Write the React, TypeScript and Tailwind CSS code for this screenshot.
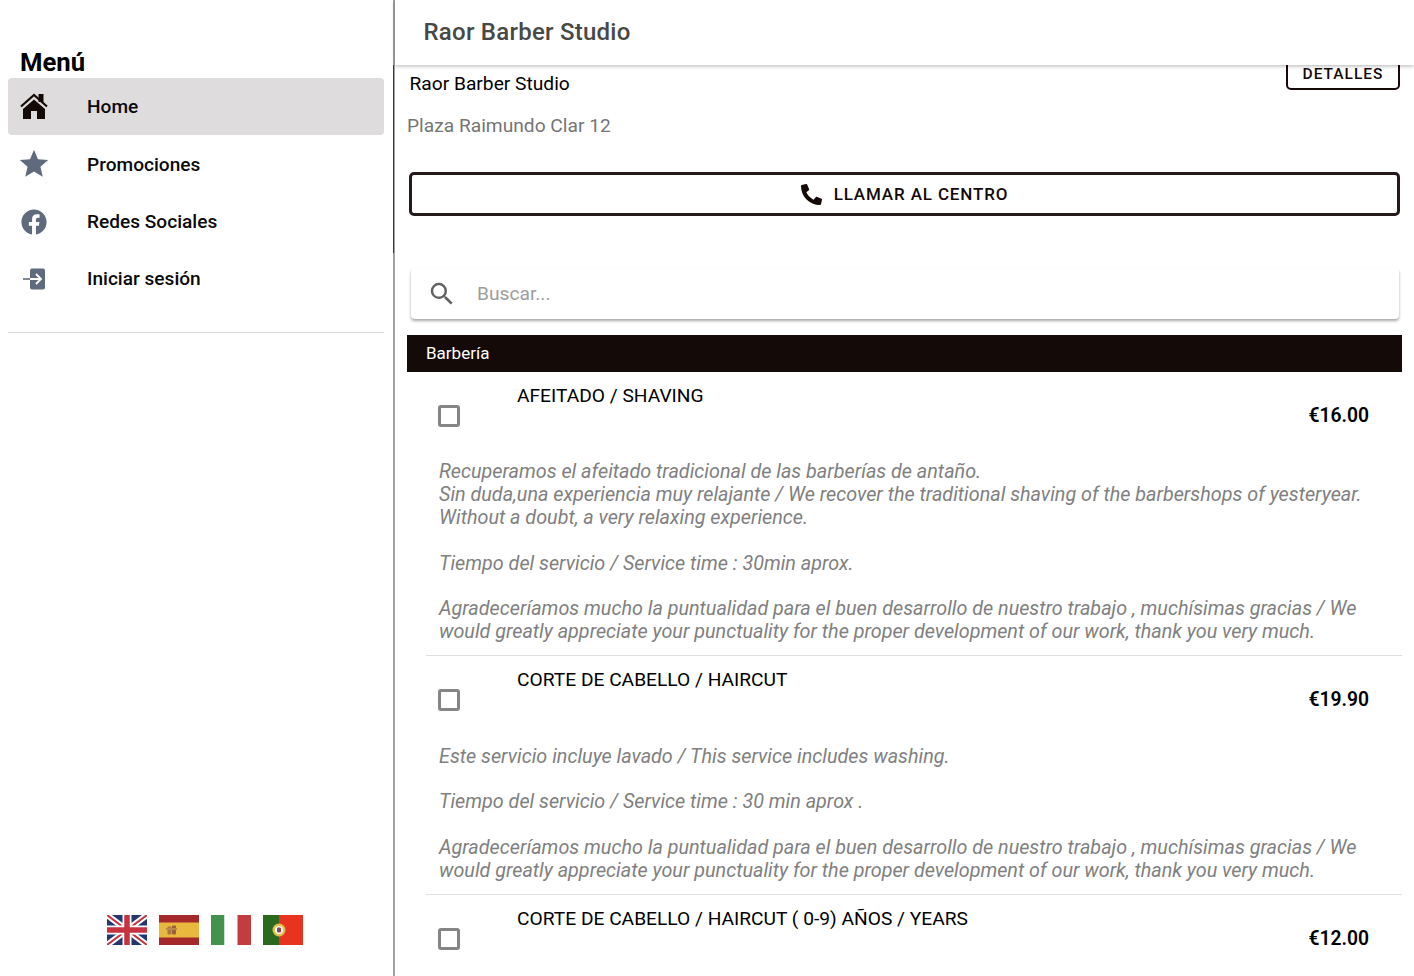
import { FaFacebook, FaPhoneAlt } from 'react-icons/fa';
import { MdSearch, MdStar } from 'react-icons/md';

const navItems = [
  {
    label: 'Home',
    icon: (
      <svg viewBox="0 0 28 27" className="w-7 h-[27px]">
        <rect x="18.500" y="1" width="5" height="8" fill="#140a08" />
        <path d="M1 13.500 14 2l13 11.500" fill="none" stroke="#140a08" strokeWidth="2.200" />
        <path d="M14 6.500 25 16v10h-8v-8h-6v8H3V16Z" fill="#140a08" />
      </svg>
    ),
    active: true,
  },
  { label: 'Promociones', icon: <MdStar size={34} className="text-[#5f6b7c]" /> },
  { label: 'Redes Sociales', icon: <FaFacebook size={26} className="text-[#5f6b7c]" /> },
  {
    label: 'Iniciar sesión',
    icon: (
      <svg viewBox="0 0 24 24" className="w-6 h-6">
        <rect x="8" y="1.500" width="15" height="21" rx="2" fill="#5f6b7c" />
        <path d="M1 12h7" fill="none" stroke="#5f6b7c" strokeWidth="1.600" />
        <path d="M8 12h11M14 7l5 5-5 5" fill="none" stroke="#fff" strokeWidth="1.800" />
      </svg>
    ),
  },
];

const services = [
  {
    name: 'AFEITADO / SHAVING',
    price: '€16.00',
    lines: [
      'Recuperamos el afeitado tradicional de las barberías de antaño.',
      'Sin duda,una experiencia muy relajante / We recover the traditional shaving of the barbershops of yesteryear. Without a doubt, a very relaxing experience.',
      '',
      'Tiempo del servicio / Service time : 30min aprox.',
      '',
      'Agradeceríamos mucho la puntualidad para el buen desarrollo de nuestro trabajo , muchísimas gracias / We would greatly appreciate your punctuality for the proper development of our work, thank you very much.',
    ],
  },
  {
    name: 'CORTE DE CABELLO / HAIRCUT',
    price: '€19.90',
    lines: [
      'Este servicio incluye lavado / This service includes washing.',
      '',
      'Tiempo del servicio / Service time : 30 min aprox .',
      '',
      'Agradeceríamos mucho la puntualidad para el buen desarrollo de nuestro trabajo , muchísimas gracias / We would greatly appreciate your punctuality for the proper development of our work, thank you very much.',
    ],
  },
  { name: 'CORTE DE CABELLO / HAIRCUT ( 0-9) AÑOS / YEARS', price: '€12.00', lines: [] },
];

function Flags() {
  return (
    <div className="flex justify-center gap-3 pb-[31px] pl-[17px]">
      <svg viewBox="0 0 40 30" className="w-10 h-[30px]">
        <rect width="40" height="30" fill="#24386f" />
        <path d="M0 0 40 30M40 0 0 30" stroke="#fff" strokeWidth="6" />
        <path d="M0 0 40 30M40 0 0 30" stroke="#c4333f" strokeWidth="2" />
        <path d="M20 0v30M0 15h40" stroke="#fff" strokeWidth="9" />
        <path d="M20 0v30M0 15h40" stroke="#c4333f" strokeWidth="5.500" />
      </svg>
      <svg viewBox="0 0 40 30" className="w-10 h-[30px]">
        <rect width="40" height="30" fill="#a5282a" />
        <rect y="7.500" width="40" height="15" fill="#e8b93c" />
        <rect x="8.500" y="11.500" width="4" height="8" rx="1" fill="#a9763f" />
        <rect x="13" y="10.500" width="4" height="9" rx="1" fill="#9c5f3c" />
        <rect x="7" y="13" width="11" height="2" fill="#b78a4c" />
      </svg>
      <svg viewBox="0 0 40 30" className="w-10 h-[30px]">
        <rect width="13.500" height="30" fill="#43934f" />
        <rect x="13.500" width="13" height="30" fill="#fff" />
        <rect x="26.500" width="13.500" height="30" fill="#c13d40" />
      </svg>
      <svg viewBox="0 0 40 30" className="w-10 h-[30px]">
        <rect width="16" height="30" fill="#2b6a1e" />
        <rect x="16" width="24" height="30" fill="#e8341f" />
        <circle cx="16" cy="15" r="6.500" fill="#e3c04a" />
        <circle cx="16" cy="15" r="4" fill="#fff" />
        <rect x="14" y="12.500" width="4" height="5" rx="1" fill="#b23a32" />
        <rect x="15.300" y="13.500" width="1.400" height="3" fill="#3c5a9a" />
      </svg>
    </div>
  );
}

function ServiceRow({ service, last }: { service: (typeof services)[number]; last: boolean }) {
  return (
    <div className="pl-[19px]">
      <div className={last ? '' : 'border-b border-[#e0e0e0]'}>
        <div className="flex items-start h-[76px]">
          <div className="w-[91px] pt-[33px] pl-[12px] shrink-0">
            <div className="w-[22px] h-[22px] border-[3px] border-[#858585] rounded-[3px]" />
          </div>
          <div className="flex-1 pt-[12px] text-[19.200px] leading-[24px] text-black">{service.name}</div>
          <div className="pt-[32px] pr-[33px] text-[19.300px] leading-[24px] font-semibold text-black">{service.price}</div>
        </div>
        {service.lines.length > 0 && (
          <div className="pl-[13px] pr-[40px] pb-[11.600px] pt-[13.400px] text-[19.750px] leading-[22.800px] italic text-[#808080]">
            {service.lines.map((line, i) => (
              <div key={i} className="min-h-[22.800px]">{line}</div>
            ))}
          </div>
        )}
      </div>
    </div>
  );
}

export default function App() {
  return (
    <div className="flex h-[976px] overflow-hidden bg-white font-['Roboto',sans-serif]">
      <aside className="w-[395px] shrink-0 flex flex-col border-r-2 border-[#a3a3a3]">
        <h2 className="pl-5 pt-[46px] text-[25.700px] leading-[32px] font-bold text-black">Menú</h2>
        <nav className="pl-2 pr-[9px] flex flex-col gap-[0.500px]">
          {navItems.map((item) => (
            <div
              key={item.label}
              className={`flex items-center h-[57px] rounded last:-mt-[0.500px] ${item.active ? 'bg-[#dedcdd]' : ''}`}
            >
              <div className="w-[52px] flex justify-center shrink-0">{item.icon}</div>
              <span className="ml-[27px] pt-[2px] text-[19.100px] font-medium text-[#0a0a0a]">{item.label}</span>
            </div>
          ))}
        </nav>
        <div className="ml-2 mr-[9px] mt-[25px] border-t border-[#dcdcdc]" />
        <div className="flex-1" />
        <Flags />
      </aside>

      <main className="relative flex-1 min-w-0 flex flex-col">
        <span className="absolute -left-[2px] top-[65px] h-[188px] w-[1px] bg-[#3a3a3a]" />
        <header className="relative z-10 h-[65px] shrink-0 flex items-center pl-[28.500px] pb-[2px] bg-white shadow-[0_1px_4px_rgba(0,0,0,0.3)]">
          <h1 className="text-[24px] font-medium text-[#484848] tracking-[0.250px]">Raor Barber Studio</h1>
        </header>
        <div className="flex-1 overflow-hidden pl-[12px] pr-[12px]">
          <div className="flex justify-between items-start h-[25px]">
            <p className="pl-[2.500px] pt-[7px] text-[19.200px] leading-[24px] text-black">Raor Barber Studio</p>
            <button className="mr-[2px] -mt-[4px] h-[29px] w-[114px] shrink-0 border-2 border-[#140a08] rounded-[5px] text-[15.500px] font-medium tracking-[1px] text-[#140a08] pb-[2px]">
              DETALLES
            </button>
          </div>
          <p className="mt-[24px] text-[19.200px] leading-[24px] text-[#757575]">Plaza Raimundo Clar 12</p>
          <button className="mt-[34px] ml-[2px] w-[991px] h-[44px] flex items-center justify-center gap-[12px] border-[3px] border-[#241a1a] rounded-[5px] text-[17px] font-medium tracking-[0.860px] text-[#140a08]">
            <FaPhoneAlt size={21} />
            <span className="pt-[2px]">LLAMAR AL CENTRO</span>
          </button>
          <div className="mt-[52px] ml-[4px] w-[988px] h-[51px] flex items-center bg-white rounded shadow-[0_2px_3px_rgba(0,0,0,0.35)]">
            <MdSearch size={30} className="ml-[16px] text-[#616161]" />
            <span className="ml-[20px] pt-[2px] text-[19.200px] text-[#9e9e9e]">Buscar...</span>
          </div>
          <div className="mt-[16px] h-[37px] w-[995px] flex items-center pl-[19px] bg-[#140a08] text-white text-[17px]">
            Barbería
          </div>
          {services.map((service, i) => (
            <ServiceRow key={service.name} service={service} last={i === services.length - 1} />
          ))}
        </div>
      </main>
    </div>
  );
}
